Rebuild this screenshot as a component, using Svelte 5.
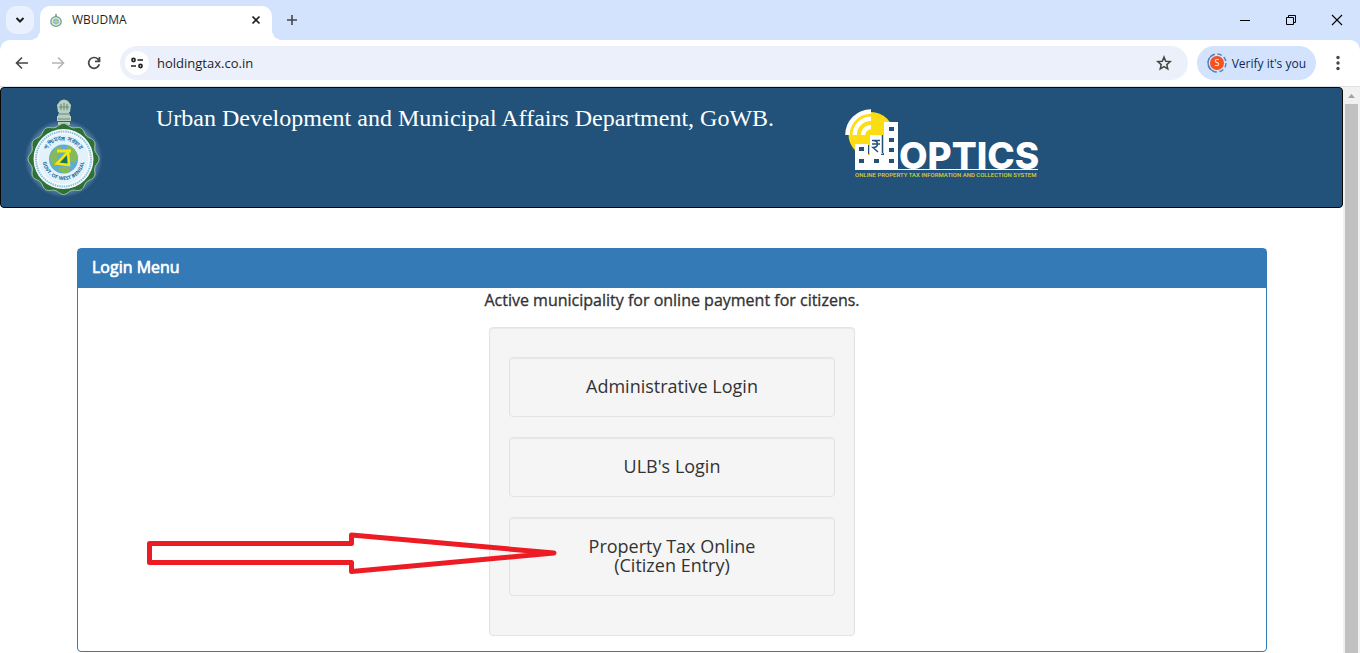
<script>
  let address = 'holdingtax.co.in'

  const entries = [
    { lines: ['Administrative Login'] },
    { lines: ["ULB's Login"] },
    { lines: ['Property Tax Online', '(Citizen Entry)'], arrow: true }
  ]

  // scalloped rim of the state emblem
  function rim(cx, cy, r, depth, lobes) {
    const pts = []
    for (let i = 0; i < 240; i++) {
      const a = (i / 240) * Math.PI * 2
      const d = r + depth * Math.cos(a * lobes)
      pts.push(`${(cx + d * Math.cos(a)).toFixed(2)},${(cy + d * Math.sin(a)).toFixed(2)}`)
    }
    return pts.join(' ')
  }
</script>


<div class="browser">
  <div class="tabs">
    <button class="search" aria-label="Search tabs">
      <svg width="10" height="8" viewBox="0 0 10 8"><path d="M1.5 2l3.5 3.5L8.5 2" fill="none" stroke="#1f1f1f" stroke-width="2"/></svg>
    </button>
    <div class="tab">
      <svg class="favicon" width="16" height="16" viewBox="0 0 16 16">
        <rect x="7" y="2" width="2" height="3" fill="#8ab09a"/>
        <ellipse cx="8" cy="9.5" rx="5.2" ry="4.8" fill="#cfe6ea" stroke="#6f9c7f" stroke-width="1.2"/>
        <circle cx="8" cy="9.5" r="2.8" fill="#7fbbe0"/>
        <circle cx="8" cy="9.5" r="1.5" fill="#c3d545"/>
      </svg>
      <span class="name">WBUDMA</span>
      <button class="close" aria-label="Close tab">
        <svg width="10" height="10" viewBox="0 0 10 10"><path d="M1.5 1.5l7 7M8.5 1.5l-7 7" stroke="#1f1f1f" stroke-width="1.7"/></svg>
      </button>
    </div>
    <button class="new" aria-label="New tab">
      <svg width="12" height="12" viewBox="0 0 12 12"><path d="M6 1v10M1 6h10" stroke="#444746" stroke-width="1.6"/></svg>
    </button>
    <div class="window">
      <button aria-label="Minimize"><svg width="12" height="12" viewBox="0 0 12 12"><path d="M1 6.5h10" stroke="#000"/></svg></button>
      <button aria-label="Restore"><svg width="12" height="12" viewBox="0 0 12 12" fill="none" stroke="#000"><path d="M1.5 3.5h7v7h-7zM3.5 3.5v-2h7v7h-2"/></svg></button>
      <button aria-label="Close"><svg width="12" height="12" viewBox="0 0 12 12"><path d="M1 1l10 10M11 1L1 11" stroke="#000" stroke-width="1.1"/></svg></button>
    </div>
  </div>

  <div class="toolbar">
    <button class="tool" aria-label="Back">
      <svg width="14" height="14" viewBox="0 0 14 14" fill="none" stroke="#444746" stroke-width="1.6"><path d="M13 7H2M7 1.5L1.5 7 7 12.5"/></svg>
    </button>
    <button class="tool" aria-label="Forward">
      <svg width="14" height="14" viewBox="0 0 14 14" fill="none" stroke="#b4b5b6" stroke-width="1.6"><path d="M1 7h11M7 1.5L12.5 7 7 12.5"/></svg>
    </button>
    <button class="tool" aria-label="Reload">
      <svg width="14" height="14" viewBox="0 0 14 14" fill="none" stroke="#444746" stroke-width="1.7"><path d="M12.3 8.3A5.4 5.4 0 1 1 11 3.2l1.3 1.5M12.5 1v4.4H8"/></svg>
    </button>
    <div class="address">
      <button class="site" aria-label="View site information">
        <svg width="14" height="14" viewBox="0 0 14 14" fill="none" stroke="#1f1f1f" stroke-width="1.6"><circle cx="3.5" cy="4" r="1.6"/><path d="M7.5 4H13M1 10h5"/><circle cx="10.5" cy="10" r="1.6"/></svg>
      </button>
      <input type="text" aria-label="Address" bind:value={address}>
      <button class="tool" aria-label="Bookmark this tab">
        <svg width="16" height="16" viewBox="0 0 16 16" fill="none" stroke="#444746" stroke-width="1.5"><path d="M8 2l1.7 4.2 4.5.4-3.4 3 1 4.4L8 11.7 4.2 14l1-4.4-3.4-3 4.5-.4z"/></svg>
      </button>
    </div>
    <button class="verify">
      <svg width="20" height="20" viewBox="0 0 20 20">
        <circle cx="10" cy="10" r="9" fill="none" stroke="#5b7fb8" stroke-width="1.4" stroke-dasharray="4.5 2.6"/>
        <path d="M6 18A9 9 0 0 1 6 2" fill="none" stroke="#5b7fb8" stroke-width="1.4"/>
        <circle cx="10" cy="10" r="7" fill="#f4511e"/>
        <text x="10" y="13" text-anchor="middle">S</text>
      </svg>
      Verify it's you
    </button>
    <button class="menu" aria-label="Menu">
      <svg width="4" height="16" viewBox="0 0 4 16" fill="#444746"><circle cx="2" cy="2.5" r="1.7"/><circle cx="2" cy="8" r="1.7"/><circle cx="2" cy="13.5" r="1.7"/></svg>
    </button>
  </div>

  <div class="view">
    <div class="page">
      <header>
        <svg class="emblem" width="80" height="104" viewBox="0 0 80 104" role="img" aria-label="Government of West Bengal">
          <defs>
            <radialGradient id="glow"><stop offset="0.8" stop-color="#a9c3dc" stop-opacity="0.5"/><stop offset="1" stop-color="#a9c3dc" stop-opacity="0"/></radialGradient>
            <path id="lower" d="M18.5 65a21 21 0 0 0 42 0"/>
            <path id="upper" d="M21 65a18.5 18.5 0 0 1 37 0"/>
          </defs>
          <circle cx="39.5" cy="64.5" r="39" fill="url(#glow)"/>
          <g fill="#b9cdc0">
            <path d="M36 7q4-3 8 0l3 4-1 7H34l-1-7z"/>
            <path d="M35 18h10l1 4H34zM33 22h14v5H33zM34 28h12v3H34z"/>
          </g>
          <path d="M37 10v6M40 9v7M43 10v6M35 13h10M35 20h10M34 25h12" stroke="#5f8f76" fill="none"/>
          <polygon points={rim(39.5, 65, 34, 1.5, 12)} fill="#2c7136" stroke="#a8c6b8" stroke-width="1"/>
          <circle cx="39.5" cy="65" r="30" fill="#f4fafc"/>
          <circle cx="39.5" cy="65" r="27.5" fill="none" stroke="#8dc0dc" stroke-width="2" stroke-dasharray="1.5 .8"/>
          <circle cx="39.5" cy="65" r="25" fill="#e3f2fa"/>
          <circle cx="39.5" cy="65" r="14.5" fill="#5eaadb"/>
          <path d="M26 62q3-8 10-10l3 5-6 5 2 6-4 5-4-3zM43 51q9 2 11 12l-3 6-5-2-4-6zM33 75l8-3 6 3-3 4q-6 1-11-4z" fill="#86b957"/>
          <path d="M33 57h14" fill="none" stroke="#f1e516" stroke-width="3"/>
          <path d="M44 58L33 69.5 45 71z" fill="#197451" stroke="#f1e516" stroke-width="2.6"/>
          <text class="ring"><textPath href="#lower" startOffset="50%" text-anchor="middle">GOVT. OF WEST BENGAL</textPath></text>
          <text class="ring upper"><textPath href="#upper" startOffset="50%" text-anchor="middle">পশ্চিমবঙ্গ সরকার</textPath></text>
        </svg>
        <h1>Urban Development and Municipal Affairs Department, GoWB.</h1>
        <svg class="optics" width="200" height="76" viewBox="0 0 200 76" role="img" aria-label="OPTICS">
          <circle cx="26" cy="27.5" r="22.5" fill="#fcdc12"/>
          <path d="M26 4.5A23.5 23.5 0 0 0 2.5 28M26 11.7A16.3 16.3 0 0 0 9.7 28M26 20A8 8 0 0 0 18 28" fill="none" stroke="#fff" stroke-width="4.5"/>
          <path d="M10 37h13v11h2V28h11v20h3V15h14v47h140v1H10z" fill="#fff"/>
          <path d="M23 38h1v9h-1zM37 28h1v18h-1z" fill="#22527a"/>
          <path d="M14 40h5v4h-5zM14 52h5v4h-5zM29 52h5v4h-5zM44 20h5v4h-5zM44 31h5v4h-5zM44 41h5v4h-5zM44 52h5v4h-5z" fill="#22527a"/>
          <path d="M27 33.5h8M27 37h8M28 33.5c6 0 6 7 0 7l5 4.5" fill="none" stroke="#22527a" stroke-width="1.5"/>
          <text x="54" y="62" class="word">OPTICS</text>
          <text x="10" y="70" class="line">ONLINE PROPERTY TAX INFORMATION AND COLLECTION SYSTEM</text>
        </svg>
      </header>

      <main>
        <h2>Login Menu</h2>
        <p>Active municipality for online payment for citizens.</p>
        <nav aria-label="Login Menu">
          {#each entries as entry}
            <a href="#login">
              {#each entry.lines as line}
                <span>{line}</span>
              {/each}
              {#if entry.arrow}
                <svg class="arrow" width="412" height="44" viewBox="0 0 412 44"><path d="M3.5 11.5H205.5V3L408 21 205.5 39.5V30.5H3.5z" fill="none" stroke="#ed1c24" stroke-width="5" stroke-linejoin="round"/></svg>
              {/if}
            </a>
          {/each}
        </nav>
      </main>
    </div>
    <div class="scrollbar">
      <svg width="17" height="17" viewBox="0 0 17 17"><path d="M5 11l3.5-4 3.5 4z" fill="#a3a3a3"/></svg>
      <div class="thumb"></div>
    </div>
  </div>
</div>


<style>

  :global(body) {
    margin: 0;
  }

  .browser {
    display: flex;
    flex-direction: column;
    height: 100vh;
    overflow: hidden;
    background: #d3e3fd;
    font-family: 'Open Sans', sans-serif;
    color: #333;
  }

  button {
    display: flex;
    align-items: center;
    justify-content: center;
    padding: 0;
    border: 0;
    background: none;
    font: inherit;
  }

  .tabs {
    display: flex;
    height: 40px;
    flex: none;
  }

  .search {
    width: 28px;
    height: 28px;
    margin: 6px;
    border-radius: 10px;
    background: #e9f0fe;
  }

  .tab {
    position: relative;
    display: flex;
    align-items: center;
    box-sizing: border-box;
    width: 232px;
    height: 34px;
    margin-top: 6px;
    padding: 0 8px;
    border-radius: 10px 10px 0 0;
    background: #fff;
  }

  .tab::before, .tab::after {
    content: '';
    position: absolute;
    bottom: 0;
    width: 10px;
    height: 10px;
  }

  .tab::before {
    right: 100%;
    background: radial-gradient(circle at 0 0, transparent 10px, #fff 10px);
  }

  .tab::after {
    left: 100%;
    background: radial-gradient(circle at 100% 0, transparent 10px, #fff 10px);
  }

  .name {
    flex: 1;
    margin-left: 8px;
    font-size: 12px;
    line-height: 16px;
    color: #1f1f1f;
  }

  .name, .favicon, .close {
    margin-bottom: 6px;
  }

  .close {
    width: 16px;
    height: 16px;
  }

  .new {
    width: 28px;
    margin-left: 6px;
  }

  .window {
    display: flex;
    margin-left: auto;
  }

  .window button {
    width: 46px;
  }

  .toolbar {
    display: flex;
    align-items: center;
    flex: none;
    height: 46px;
    padding: 0 8px;
    border-bottom: 1px solid #dfe1e5;
    border-radius: 10px 10px 0 0;
    background: #fff;
  }

  .tool {
    width: 28px;
    height: 28px;
    margin-right: 8px;
  }

  .menu {
    width: 28px;
    height: 28px;
    margin-left: 8px;
  }

  .address {
    display: flex;
    align-items: center;
    flex: 1;
    height: 34px;
    margin: 0 9px 0 4px;
    padding: 0 2px 0 5px;
    border-radius: 17px;
    background: #ecf0fa;
  }

  .site {
    width: 24px;
    height: 24px;
    border-radius: 50%;
    background: #fff;
  }

  input {
    flex: 1;
    min-width: 0;
    padding: 0 8px;
    border: 0;
    outline: 0;
    background: none;
    font: 13px/18px 'Open Sans', sans-serif;
    color: #1f1f1f;
  }

  .verify {
    gap: 5px;
    height: 34px;
    padding: 0 10px;
    border-radius: 17px;
    background: #d3e3fd;
    font-size: 12px;
    color: #0a2a5e;
    white-space: nowrap;
  }

  .verify text {
    font-size: 9px;
    fill: #fff;
  }

  .view {
    display: flex;
    flex: 1;
    min-height: 0;
    background: #fff;
  }

  .page {
    flex: 1;
    overflow: hidden;
  }

  header {
    display: flex;
    align-items: flex-start;
    box-sizing: border-box;
    height: 121px;
    padding: 0 23px;
    border: 1px solid #080808;
    border-radius: 4px;
    background: #22527a;
  }

  .emblem {
    flex: none;
    margin-top: 6px;
  }

  .ring {
    font: bold 5px 'Open Sans', sans-serif;
    fill: #17699c;
  }

  .upper {
    font-size: 6px;
  }

  h1 {
    margin: 16px 0 0 52px;
    font: 24px/28px 'Liberation Serif', serif;
    color: #fff;
    white-space: nowrap;
  }

  .optics {
    flex: none;
    margin: 19px 0 0 71px;
  }

  .word {
    font: 800 37px Inter, sans-serif;
    fill: #fff;
  }

  .line {
    font: 500 6px Roboto, sans-serif;
    fill: #d9d233;
  }

  main {
    margin: 40px 76px 0 77px;
    padding-bottom: 15px;
    border: 1px solid #337ab7;
    border-radius: 4px;
  }

  h2, p {
    margin: 0;
    font-size: 16px;
    font-weight: 400;
    -webkit-text-stroke: thin;
  }

  h2 {
    padding: 7px 14px 9px;
    background: #337ab7;
    line-height: 23px;
    color: #fff;
    text-shadow: 0 0 1px #fff;
  }

  p {
    margin-bottom: 15px;
    line-height: 24px;
    text-align: center;
  }

  nav {
    display: flex;
    flex-direction: column;
    gap: 20px;
    box-sizing: border-box;
    max-width: 366px;
    margin: 0 auto;
    padding: 29px 19px 39px;
  }

  nav, a {
    border: 1px solid #e3e3e3;
    border-radius: 4px;
    background: #f5f5f5;
    box-shadow: inset 0 1px 1px rgba(0, 0, 0, .05);
  }

  a {
    position: relative;
    padding: 19px 19px 20px;
    font-size: 18px;
    line-height: 19px;
    text-align: center;
    text-decoration: none;
    color: #333;
  }

  span {
    display: block;
  }

  .arrow {
    position: absolute;
    top: 14px;
    right: 276px;
  }

  .scrollbar {
    width: 17px;
    background: #f1f1f1;
  }

  .scrollbar svg {
    display: block;
  }

  .thumb {
    height: 100%;
    margin: 0 2px;
    background: #c1c1c1;
  }

</style>
